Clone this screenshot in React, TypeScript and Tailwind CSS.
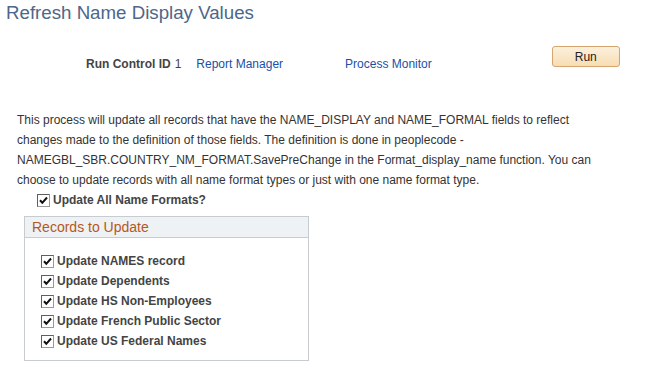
const records = [
  "Update NAMES record",
  "Update Dependents",
  "Update HS Non-Employees",
  "Update French Public Sector",
  "Update US Federal Names",
];

function Box() {
  return (
    <span className="w-[13px] h-[13px] border border-t-[#5f5f5f] border-l-[#5f5f5f] border-b-[#9a9a9a] border-r-[#9a9a9a] bg-white flex items-center justify-center shrink-0">
      <svg width="9" height="9" viewBox="0 0 9 9">
        <path d="M1 4.3 L3.3 6.8 L8 1.5" stroke="#111" strokeWidth="2" fill="none" />
      </svg>
    </span>
  );
}

export default function App() {
  return (
    <div className="w-[647px] h-[370px] bg-white font-['Liberation_Sans',Arial,sans-serif] text-[#333] overflow-hidden">
      <h1 className="text-[18.7px] leading-[22px] text-[#4d6789] pl-[6px] pt-[2px]">
        Refresh Name Display Values
      </h1>

      <div className="flex items-start mt-[22px] h-[22px]">
        <span className="ml-[86px] mt-[9px] text-[12px] font-bold text-[#444]">Run Control ID</span>
        <span className="ml-[4px] mt-[9px] text-[12px] text-[#444]">1</span>
        <span className="ml-[15px] mt-[9px] text-[12px] text-[#1b4fa8]">Report Manager</span>
        <span className="ml-[62px] mt-[9px] text-[12px] text-[#1b4fa8]">Process Monitor</span>
        <button className="ml-[120px] w-[68px] h-[21px] rounded-[3px] border border-[#d6a46e] bg-gradient-to-b from-[#fcf0dc] to-[#f7ddb4] text-[12px] text-[#222]">
          Run
        </button>
      </div>

      <p className="mt-[42px] ml-[17px] w-[590px] text-[12px] leading-[20px] text-[#333]">
        This process will update all records that have the NAME_DISPLAY and NAME_FORMAL fields to reflect
        changes made to the definition of those fields. The definition is done in peoplecode -
        NAMEGBL_SBR.COUNTRY_NM_FORMAT.SavePreChange in the Format_display_name function. You can
        choose to update records with all name format types or just with one name format type.
      </p>

      <label className="flex items-center gap-[3px] ml-[37px] mt-[1px] h-[18px]">
        <Box />
        <span className="text-[12px] font-bold text-[#444]">Update All Name Formats?</span>
      </label>

      <div className="ml-[24px] mt-[7px] w-[285px] h-[145px] border border-[#c6ccd2]">
        <div className="h-[21px] bg-[#eef2f4] border-b border-[#c6ccd2] pl-[7px] text-[14px] leading-[20px] text-[#b5581d]">
          Records to Update
        </div>
        <div className="pt-[13px] pl-[16px] flex flex-col">
          {records.map((r) => (
            <label key={r} className="flex items-center gap-[3px] h-[20px]">
              <Box />
              <span className="text-[12px] font-bold text-[#444]">{r}</span>
            </label>
          ))}
        </div>
      </div>
    </div>
  );
}
